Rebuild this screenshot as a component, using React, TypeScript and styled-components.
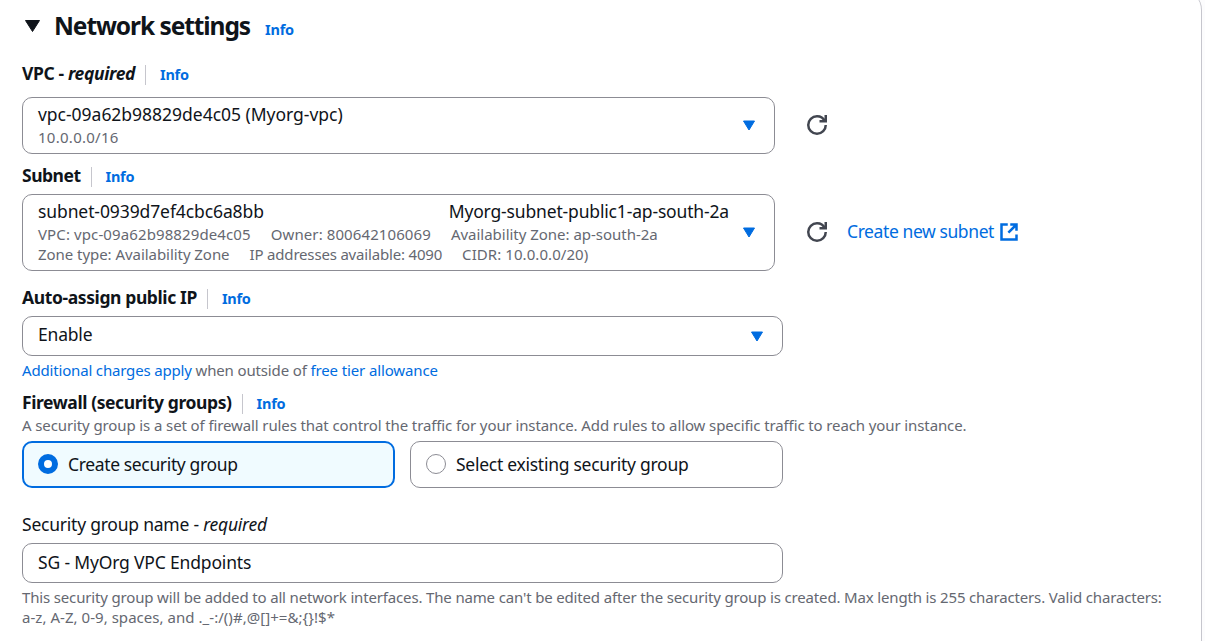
import React from "react";
import styled, { createGlobalStyle } from "styled-components";

const GlobalStyle = createGlobalStyle`
  * { box-sizing: border-box; }
  body { margin: 0; background: #fcfcfd; font-family: "Noto Sans", "Open Sans", sans-serif; color: #0f141a; }
`;

const Page = styled.div`
  width: 1205px;
  height: 641px;
  overflow: hidden;
`;

const Panel = styled.section`
  width: 1202px;
  height: 690px;
  margin-top: -10px;
  padding: 10px 22px 0;
  background: #fff;
  border-right: 1px solid #c6c6cd;
  border-top-right-radius: 20px;
`;

const Header = styled.header`
  display: flex;
  align-items: center;
  height: 54px;
  padding-bottom: 2px;
`;

const Text = styled.span<{ $size?: number; $track?: number; $weight?: number; $tone?: "link" | "muted" }>`
  font-size: ${(p) => p.$size ?? 17.5}px;
  letter-spacing: ${(p) => p.$track ?? 0}px;
  font-weight: ${(p) => p.$weight ?? 400};
  color: ${(p) => (p.$tone === "link" ? "#006ce0" : p.$tone === "muted" ? "#656871" : "#0f141a")};
  white-space: pre;
`;

const Title = styled.h2`
  margin: 0 15px 0 0;
  font-size: 24.5px;
  line-height: 34px;
  letter-spacing: -1.07px;
`;

const LabelRow = styled.div<{ $top: number; $bottom: number }>`
  display: flex;
  align-items: center;
  height: 20px;
  margin: ${(p) => p.$top}px 0 ${(p) => p.$bottom}px;
`;

const Label = styled(Text)`
  line-height: 20px;
  padding-bottom: 4px;
`;

const InfoLink = styled(Text)<{ $drop?: number }>`
  line-height: 20px;
  padding-top: ${(p) => p.$drop ?? 0}px;
  padding-bottom: ${(p) => (p.$drop ? 0 : 2)}px;
`;

const Divider = styled.i`
  width: 1px;
  height: 20px;
  margin: 0 14px 0 10px;
  background: #c6c6cd;
`;

const FieldRow = styled.div`
  display: flex;
  align-items: center;
`;

const Field = styled.div<{ $width: number; $height: number }>`
  display: flex;
  align-items: center;
  justify-content: space-between;
  width: ${(p) => p.$width}px;
  height: ${(p) => p.$height}px;
  padding: 0 18px 0 15px;
  border: 1px solid #8c8c94;
  border-radius: 10px;
  background: #fff;
`;

const Value = styled(Text)<{ $lift: number }>`
  padding-bottom: ${(p) => p.$lift}px;
`;

const Lines = styled.div`
  width: 691px;
  padding-bottom: 2px;
`;

const Line = styled.div`
  display: flex;
  justify-content: space-between;
  height: 24px;
  line-height: 23px;
`;

const Tags = styled.div`
  display: flex;
  gap: 20px;
  height: 20px;
  line-height: 20px;
`;

const IconButton = styled.button`
  display: flex;
  margin: 0 0 0 32px;
  padding: 0 0 1px;
  border: 0;
  background: none;
  color: #424650;
`;

const LinkGroup = styled.a`
  display: flex;
  align-items: center;
  gap: 5px;
  margin-left: 20px;
  padding-bottom: 2px;
`;

const Help = styled.p`
  margin: 0;
  line-height: 20px;
  display: flex;
  flex-wrap: wrap;
`;

const HelpArea = styled.div<{ $gap: number }>`
  padding-top: ${(p) => p.$gap}px;
  padding-bottom: 1px;
`;

const Tiles = styled.div`
  display: flex;
  gap: 15px;
  margin-top: 5px;
`;

const Tile = styled.label<{ $selected?: boolean }>`
  display: flex;
  align-items: center;
  gap: 10px;
  width: 373px;
  height: 47px;
  padding: 0 ${(p) => (p.$selected ? 14 : 15)}px 2px;
  border: ${(p) => (p.$selected ? "2px solid #006ce0" : "1px solid #8c8c94")};
  border-radius: 10px;
  background: ${(p) => (p.$selected ? "#f0fbff" : "#fff")};
`;

const Radio = styled.span<{ $selected?: boolean }>`
  width: 20px;
  height: 20px;
  border-radius: 50%;
  border: ${(p) => (p.$selected ? "6px solid #006ce0" : "1px solid #8c8c94")};
  background: #fff;
`;

const TitleCaret = styled.svg`
  margin: 0 13px 0 2px;
`;

const Caret = () => (
  <svg width="14" height="11" viewBox="0 0 14 11">
    <path d="M1.500 1h11L7 10z" fill="#006ce0" stroke="#006ce0" strokeLinejoin="round" />
  </svg>
);

const Refresh = () => (
  <IconButton aria-label="Refresh">
    <svg width="20" height="20" viewBox="0 0 16 16" fill="none" stroke="currentColor" strokeWidth="2" overflow="visible">
      <path d="M10 5h5V0" />
      <path d="M15 8a6.957 6.957 0 0 1-7 7 6.957 6.957 0 0 1-7-7 6.957 6.957 0 0 1 7-7 6.87 6.87 0 0 1 6.3 4" />
    </svg>
  </IconButton>
);

const External = () => (
  <svg width="20" height="20" viewBox="0 0 16 16" fill="none" stroke="#006ce0" strokeWidth="2">
    <path d="M9 2h5v5M7.500 8.500L14 2M14 10v4H2V2h5" />
  </svg>
);

const Info = ({ drop }: { drop?: number }) => (
  <InfoLink $size={14.5} $weight={700} $tone="link" $track={-0.25} $drop={drop}>Info</InfoLink>
);

const Small = ({ track, link, children }: { track: number; link?: boolean; children: React.ReactNode }) => (
  <Text $size={15} $track={track} $tone={link ? "link" : "muted"}>{children}</Text>
);

const LinkLabel = styled(Text)`
  padding-bottom: 2px;
`;

export default function App() {
  return (
    <Page>
      <GlobalStyle />
      <Panel>
        <Header>
          <TitleCaret width="17" height="14" viewBox="0 0 17 14">
            <path d="M1.500 1.500h14L8.500 12.500z" fill="#0f141a" stroke="#0f141a" strokeLinejoin="round" />
          </TitleCaret>
          <Title>Network settings</Title>
          <Info drop={6} />
        </Header>

        <LabelRow $top={11} $bottom={12}>
          <Label $weight={700} $track={-0.38}>VPC - <em>required</em></Label>
          <Divider />
          <Info />
        </LabelRow>
        <FieldRow>
          <Field $width={753} $height={57}>
            <Lines>
              <Line><Text $track={-0.02}>vpc-09a62b98829de4c05 (Myorg-vpc)</Text></Line>
              <Tags><Small track={0.27}>10.0.0.0/16</Small></Tags>
            </Lines>
            <Caret />
          </Field>
          <Refresh />
        </FieldRow>

        <LabelRow $top={13} $bottom={7}>
          <Label $weight={700} $track={-0.5}>Subnet</Label>
          <Divider />
          <Info />
        </LabelRow>
        <FieldRow>
          <Field $width={753} $height={77}>
            <Lines>
              <Line>
                <Text $track={-0.1}>subnet-0939d7ef4cbc6a8bb</Text>
                <Text $track={-0.16}>Myorg-subnet-public1-ap-south-2a</Text>
              </Line>
              <Tags>
                <Small track={0.11}>VPC: vpc-09a62b98829de4c05</Small>
                <Small track={0.1}>Owner: 800642106069</Small>
                <Small track={-0.02}>Availability Zone: ap-south-2a</Small>
              </Tags>
              <Tags>
                <Small track={-0.05}>Zone type: Availability Zone</Small>
                <Small track={-0.18}>IP addresses available: 4090</Small>
                <Small track={0.07}>CIDR: 10.0.0.0/20)</Small>
              </Tags>
            </Lines>
            <Caret />
          </Field>
          <Refresh />
          <LinkGroup>
            <LinkLabel $tone="link" $track={-0.41}>Create new subnet</LinkLabel>
            <External />
          </LinkGroup>
        </FieldRow>

        <LabelRow $top={18} $bottom={7}>
          <Label $weight={700} $track={-0.39}>Auto-assign public IP</Label>
          <Divider />
          <Info />
        </LabelRow>
        <Field $width={761} $height={40}>
          <Value $lift={4} $track={-0.2}>Enable</Value>
          <Caret />
        </Field>
        <HelpArea $gap={4}>
          <Help>
            <Small link track={-0.17}>Additional charges apply</Small>
            <Small track={-0.14}> when outside of </Small>
            <Small link track={-0.13}>free tier allowance</Small>
          </Help>
        </HelpArea>

        <LabelRow $top={13} $bottom={1}>
          <Label $weight={700} $track={-0.41}>Firewall (security groups)</Label>
          <Divider />
          <Info />
        </LabelRow>
        <HelpArea $gap={0}>
          <Help>
            <Small track={-0.11}>A security group is a set of firewall rules that control the traffic for your instance. Add rules to allow specific traffic to reach your instance.</Small>
          </Help>
        </HelpArea>
        <Tiles>
          <Tile $selected><Radio $selected /><Text $track={-0.36}>Create security group</Text></Tile>
          <Tile><Radio /><Text $track={-0.27}>Select existing security group</Text></Tile>
        </Tiles>

        <LabelRow $top={28} $bottom={7}>
          <Label $track={-0.23}>Security group name - <em>required</em></Label>
        </LabelRow>
        <Field $width={761} $height={40}>
          <Value $lift={2} $track={-0.17}>SG - MyOrg VPC Endpoints</Value>
        </Field>
        <HelpArea $gap={4}>
          <Help>
            <Small track={-0.159}>This security group will be added to all network interfaces. The name can't be edited after the security group is created. Max length is 255 characters. Valid characters:</Small>
            <Small track={0.04}>a-z, A-Z, 0-9, spaces, and ._-:/()#,@[]+=&amp;;{"{}"}!$*</Small>
          </Help>
        </HelpArea>
      </Panel>
    </Page>
  );
}
